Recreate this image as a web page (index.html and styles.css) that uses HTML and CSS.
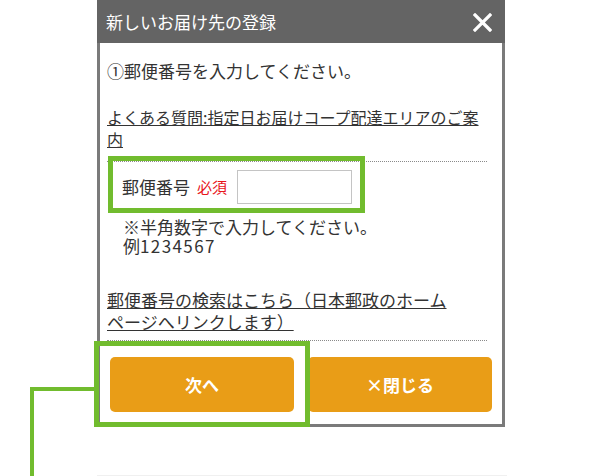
FILE: index.html
```html
<!DOCTYPE html>
<html lang="ja">
<head>
<meta charset="utf-8">
<title>新しいお届け先の登録</title>
<link rel="stylesheet" href="styles.css">
</head>
<body>
<div class="page">
  <div class="dialog">
    <div class="titlebar">
      <span class="title">新しいお届け先の登録</span>
      <svg class="close" width="19" height="19" viewBox="0 0 19 19"><path d="M2 2 L17 17 M17 2 L2 17" stroke="#fff" stroke-width="3.2" stroke-linecap="square" fill="none"/></svg>
    </div>
    <div class="body">
      <div class="content">
        <p class="step">①郵便番号を入力してください。</p>
        <a class="link faq" href="#">よくある質問:指定日お届けコープ配達エリアのご案<br>内</a>
        <div class="dots"></div>
        <div class="field">
          <span class="label">郵便番号</span>
          <span class="req">必須</span>
          <input class="zip" type="text">
        </div>
        <p class="note">※半角数字で入力してください。<br>例<span class="num">1234567</span></p>
        <a class="link search" href="#">郵便番号の検索はこちら（日本郵政のホーム<br>ページへリンクします）</a>
        <div class="dots dots-end"></div>
      </div>
      <div class="buttons">
        <button class="btn" type="button">次へ</button>
        <button class="btn" type="button">×閉じる</button>
      </div>
    </div>
  </div>
  <div class="baseline"></div>
  <div class="anno box1"></div>
  <div class="anno box2"></div>
  <div class="anno hline"></div>
  <div class="anno vline"></div>
</div>
</body>
</html>
```
FILE: styles.css
```css
html, body {
  margin: 0;
  padding: 0;
  background: #fff;
}
body {
  font-family: "Noto Sans CJK JP", "Noto Sans", sans-serif;
  color: #333;
}
.page {
  position: relative;
  width: 600px;
  height: 476px;
  overflow: hidden;
}
.dialog {
  margin-left: 97px;
  width: 408px;
}
.titlebar {
  height: 43px;
  background: #646464;
  display: flex;
  align-items: center;
  justify-content: space-between;
  padding: 0 13px 0 9px;
  box-sizing: border-box;
}
.title {
  color: #fff;
  font-size: 17px;
  line-height: 22px;
}
.close {
  display: block;
  margin-top: 1px;
}
.body {
  border: 3px solid #7a7a7a;
  border-top: none;
  background: #fff;
}
.content {
  padding: 17px 15px 0 7px;
}
.step {
  margin: 0;
  font-size: 17px;
  line-height: 22px;
}
.link {
  display: block;
  color: #333;
  text-decoration: underline;
  line-height: 22px;
}
.faq {
  margin-top: 24px;
  font-size: 16px;
}
.dots {
  margin-top: 11px;
  border-top: 1px dotted #8a8a8a;
  height: 0;
}
.dots-end {
  margin-top: 7px;
}
.field {
  margin-top: 8px;
  display: flex;
  align-items: center;
  padding-left: 15px;
}
.label {
  font-size: 17px;
  line-height: 22px;
}
.req {
  margin-left: 7px;
  font-size: 15px;
  line-height: 22px;
  color: #e8151b;
}
.zip {
  margin-left: 10px;
  width: 115px;
  height: 34px;
  box-sizing: border-box;
  border: 1px solid #c4c4c4;
  padding: 0 4px;
  font-size: 16px;
}
.note {
  margin: 13px 0 0;
  padding-left: 16px;
  font-size: 17px;
  line-height: 19px;
}
.num {
  letter-spacing: 1.4px;
}
.search {
  margin-top: 34px;
  font-size: 17px;
}
.buttons {
  display: flex;
  gap: 14px;
  padding: 16px 10px 12px;
}
.btn {
  flex: 1;
  height: 55px;
  border: none;
  border-radius: 5px;
  background: #e99d17;
  color: #fff;
  font-family: "Noto Sans CJK JP", "Noto Sans", sans-serif;
  font-size: 17px;
  font-weight: bold;
  padding: 0;
}
.baseline {
  margin: 48px 0 0 97px;
  width: 410px;
  border-top: 1px solid #f0f0f0;
}
.anno {
  position: absolute;
  box-sizing: border-box;
}
.box1 {
  left: 108px;
  top: 156px;
  width: 257px;
  height: 57px;
  border: 5px solid #71bc2e;
}
.box2 {
  left: 94px;
  top: 341px;
  width: 216px;
  height: 86px;
  border: 5px solid #71bc2e;
}
.hline {
  left: 30px;
  top: 387px;
  width: 66px;
  height: 4px;
  background: #71bc2e;
}
.vline {
  left: 30px;
  top: 387px;
  width: 4px;
  height: 89px;
  background: #71bc2e;
}
```
